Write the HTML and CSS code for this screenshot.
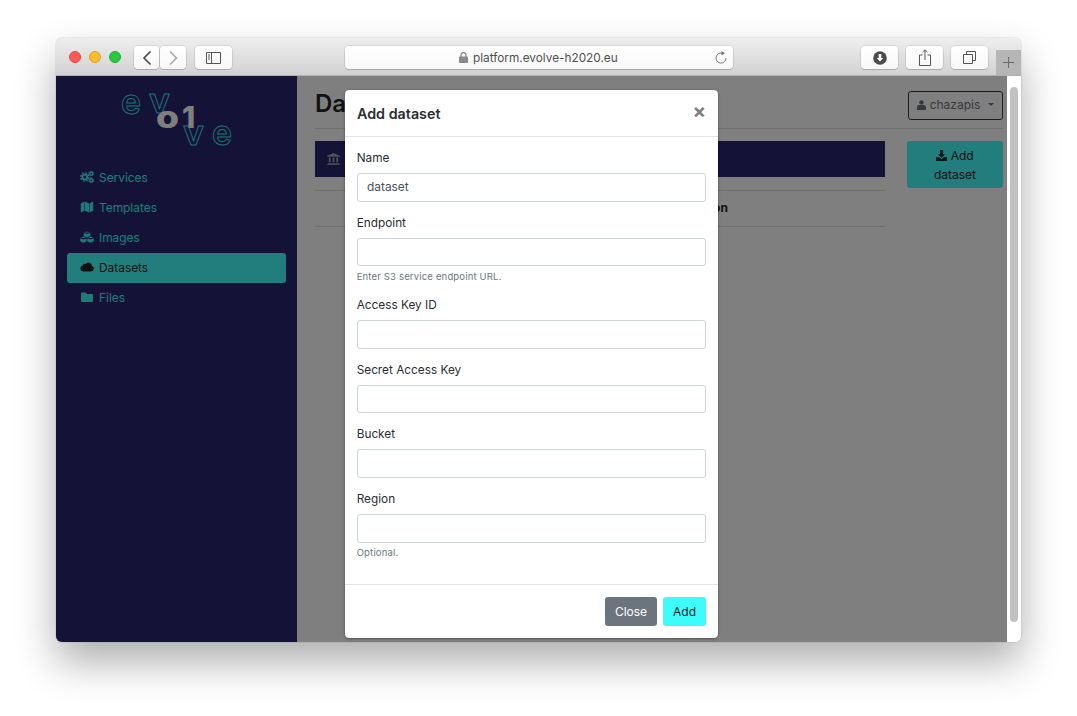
FILE: index.html
```html
<!DOCTYPE html>
<html lang="en">
<head>
<meta charset="utf-8">
<title>Datasets</title>
<link rel="stylesheet" href="styles.css">
</head>
<body>
<div class="window">
  <header class="toolbar">
    <span class="light red"></span><span class="light yellow"></span><span class="light green"></span>
    <div class="tb-btn back"><svg width="12" height="16" viewBox="0 0 12 16"><path d="M9.5 1.5 3 8l6.500 6.500" fill="none" stroke="#444" stroke-width="1.600"/></svg></div>
    <div class="tb-btn forward"><svg width="12" height="16" viewBox="0 0 12 16"><path d="M3 1.500 9.500 8 3 14.500" fill="none" stroke="#a8a8a8" stroke-width="1.600"/></svg></div>
    <div class="tb-btn side"><svg width="15" height="12" viewBox="0 0 15 12"><path d="M.5.500h14v11H.5zM5.500.500v11" fill="none" stroke="#555"/><path d="M2 3h2M2 5h2M2 7h2" stroke="#555"/></svg></div>
    <div class="url">
      <svg class="lock" width="9" height="11" viewBox="0 0 9 11"><rect y="4.500" width="9" height="6.500" rx="1" fill="#8a8a8a"/><path d="M2 5V3a2.500 2.500 0 0 1 5 0v2" fill="none" stroke="#8a8a8a" stroke-width="1.300"/></svg>
      <span class="url-text">platform.evolve-h2020.eu</span>
      <svg class="reload" width="12" height="13" viewBox="0 0 12 13"><path d="M7.500 2.300A5 5 0 1 0 11 7" fill="none" stroke="#777" stroke-width="1"/><path d="M6.500 0v4.500L10 2.200z" fill="#777"/></svg>
    </div>
    <div class="tb-btn right first"><svg width="14" height="14" viewBox="0 0 14 14"><circle cx="7" cy="7" r="6.800" fill="#4a4a4a"/><path d="M5.700 3h2.600v4h2L7 10.500 3.700 7h2z" fill="#fff"/></svg></div>
    <div class="tb-btn right"><svg width="12" height="17" viewBox="0 0 12 17"><path d="M3.500 6H.5v10.500h11V6h-3M6 11V1M3.500 3.200 6 .8l2.500 2.400" fill="none" stroke="#555"/></svg></div>
    <div class="tb-btn right"><svg width="13" height="13" viewBox="0 0 13 13"><path d="M.5 3.500h9v9h-9zM3.500 3.500v-3h9v9h-3" fill="none" stroke="#555"/></svg></div>
    <div class="new-tab"><svg width="11" height="11" viewBox="0 0 11 11"><path d="M5.500 0v11M0 5.500h11" stroke="#6a6a6a"/></svg></div>
  </header>

  <div class="viewport">
    <aside class="sidebar">
      <div class="logo">
        <svg width="130" height="70" viewBox="0 0 130 70">
          <text class="logo-line" x="1" y="29" textLength="20" lengthAdjust="spacingAndGlyphs">e</text>
          <text class="logo-line" x="29" y="28" textLength="21" lengthAdjust="spacingAndGlyphs">v</text>
          <text class="logo-line" x="63" y="60" textLength="21" lengthAdjust="spacingAndGlyphs">v</text>
          <text class="logo-line" x="92" y="60" textLength="20" lengthAdjust="spacingAndGlyphs">e</text>
          <text class="logo-solid" x="36" y="43" textLength="23" lengthAdjust="spacingAndGlyphs">o</text>
          <text class="logo-solid" x="62" y="43">1</text>
        </svg>
      </div>
      <nav class="nav">
        <a class="nav-item">
          <svg class="nav-icon" viewBox="0 0 14 12"><circle cx="4.800" cy="6" r="2.400" fill="none" stroke="currentColor" stroke-width="1.900"/><circle cx="4.800" cy="6" r="4.100" fill="none" stroke="currentColor" stroke-width="1.500" stroke-dasharray="1.700 1.520"/><circle cx="11.200" cy="2.600" r="1.600" fill="none" stroke="currentColor" stroke-width="1.400"/><circle cx="11.200" cy="2.600" r="2.500" fill="none" stroke="currentColor" stroke-width=".9" stroke-dasharray="1 .96"/><circle cx="11.200" cy="9.400" r="1.600" fill="none" stroke="currentColor" stroke-width="1.400"/><circle cx="11.200" cy="9.400" r="2.500" fill="none" stroke="currentColor" stroke-width=".9" stroke-dasharray="1 .96"/></svg>
          Services</a>
        <a class="nav-item">
          <svg class="nav-icon" viewBox="0 0 14 12"><path d="M.8 2.500 4.400.6v9.200L.8 11.600zM4.900.6l4.200 1.800v9.200L4.900 9.800zM9.600 2.400 13.200.6v9.200l-3.600 1.800z"/></svg>
          Templates</a>
        <a class="nav-item">
          <svg class="nav-icon" viewBox="0 0 14 12"><path class="cube" d="M7 .2 10.500 1.500v3.900L7 6.800 3.500 5.400V1.500zM3.500 1.500 7 2.800l3.500-1.300"/><path class="cube" d="M3.500 5.500 7 6.900v3.700L3.500 12 0 10.600V6.900zM0 6.900l3.500 1.300L7 6.900"/><path class="cube" d="M10.500 5.500 14 6.900v3.700L10.500 12 7 10.600V6.900zM7 6.900l3.500 1.300L14 6.900"/></svg>
          Images</a>
        <a class="nav-item active">
          <svg class="nav-icon" viewBox="0 0 14 12"><path d="M3.300 10.500a3 3 0 0 1-.7-5.900 2.300 2.300 0 0 1 3-1.600 3.400 3.400 0 0 1 6.200 1.700 3 3 0 0 1-.8 5.800z"/></svg>
          Datasets</a>
        <a class="nav-item">
          <svg class="nav-icon" viewBox="0 0 14 12"><path d="M2 1.500h3.500L7 3h5a1 1 0 0 1 1 1v6a1 1 0 0 1-1 1H2a1 1 0 0 1-1-1V2.500a1 1 0 0 1 1-1z"/></svg>
          Files</a>
      </nav>
    </aside>

    <main class="main">
      <div class="page-head">
        <h1 class="page-title">Datasets</h1>
        <button class="user-btn"><svg class="user-icon" viewBox="0 0 10 11"><circle cx="5" cy="2.700" r="2.500"/><path d="M0 11V8a2.500 2.500 0 0 1 2.500-2.500h5A2.500 2.500 0 0 1 10 8v3z"/></svg>chazapis<span class="caret"></span></button>
      </div>
      <div class="page-body">
        <div class="left-col">
          <div class="bank-bar"><svg class="bank-icon" viewBox="0 0 14 13"><path d="M7 0 14 3v1H0V3zM1 11h12v1H1zM0 12.200h14V13H0zM2 5h2v5H2zM6 5h2v5H6zM10 5h2v5h-2z"/></svg></div>
          <div class="table-head"><span>Description</span></div>
        </div>
        <button class="add-btn"><svg class="add-icon" viewBox="0 0 12 12"><path d="M4.500 0h3v4.500h2.300L6 8.500 2.200 4.500h2.300zM0 8h3.500L6 10l2.500-2H12v4H0z"/></svg> Add dataset</button>
      </div>
    </main>

    <div class="scrollbar"><div class="thumb"></div></div>
    <div class="backdrop"></div>

    <section class="modal">
      <header class="modal-head">
        <h2 class="modal-title">Add dataset</h2>
        <span class="close">×</span>
      </header>
      <div class="modal-body">
        <div class="field"><label class="label">Name</label><input class="input" value="dataset"></div>
        <div class="field"><label class="label">Endpoint</label><input class="input"><small class="help">Enter S3 service endpoint URL.</small></div>
        <div class="field"><label class="label">Access Key ID</label><input class="input"></div>
        <div class="field"><label class="label">Secret Access Key</label><input class="input"></div>
        <div class="field"><label class="label">Bucket</label><input class="input"></div>
        <div class="field"><label class="label">Region</label><input class="input"><small class="help">Optional.</small></div>
      </div>
      <footer class="modal-foot">
        <button class="btn grey">Close</button>
        <button class="btn cyan">Add</button>
      </footer>
    </section>
  </div>
</div>
</body>
</html>
```
FILE: styles.css
```css
* { box-sizing: border-box; }
html, body { margin: 0; height: 716px; overflow: hidden; background: #fff; }
body { padding: 38px 56px 0; font-family: Inter, "Liberation Sans", sans-serif; }

.window {
  width: 965px;
  height: 604px;
  border-radius: 6px;
  box-shadow: 0 0 1px rgba(0,0,0,.5), 0 20px 40px rgba(0,0,0,.32);
  display: flex;
  flex-direction: column;
}

.toolbar {
  height: 38px;
  flex: none;
  display: flex;
  align-items: flex-start;
  padding: 13px 0 0 13px;
  background: linear-gradient(#eeeeee, #d2d2d2);
  border-radius: 6px 6px 0 0;
  border-bottom: 1px solid #b1b1b1;
  position: relative;
}
.light { width: 12px; height: 12px; border-radius: 50%; margin-right: 8px; }
.red { background: #fc5b57; border: 1px solid #e5453f; }
.yellow { background: #fdbc2f; border: 1px solid #e0a126; }
.green { background: #29c840; border: 1px solid #20ac30; }

.tb-btn {
  height: 23px;
  margin-top: -5px;
  background: linear-gradient(#fff, #f7f7f7);
  border-radius: 4px;
  box-shadow: 0 0 0 .5px rgba(0,0,0,.16), 0 1px 1px rgba(0,0,0,.14);
  display: flex;
  align-items: center;
  justify-content: center;
}
.back { width: 25px; margin-left: 5px; }
.forward { width: 26px; margin-left: 1px; }
.side { width: 37px; margin-left: 9px; }
.right { width: 37px; margin-left: 8px; }
.right.first { margin-left: 128px; }

.url {
  width: 388px;
  height: 23px;
  margin: -5px 0 0 113px;
  background: linear-gradient(#fff, #f8f8f8);
  border-radius: 4px;
  box-shadow: 0 0 0 .5px rgba(0,0,0,.16), 0 1px 1px rgba(0,0,0,.14);
  display: flex;
  align-items: center;
  padding-left: 114px;
  position: relative;
}
.lock { margin-right: 5px; }
.url-text { font-size: 11.800px; color: #4f4f4f; white-space: nowrap; }
.reload { position: absolute; right: 6px; top: 5px; }

.new-tab {
  width: 25px;
  height: 25px;
  margin: -1px 0 0 8px;
  background: #b6b6b6;
  display: flex;
  align-items: center;
  justify-content: center;
  border-top-right-radius: 1px;
}

.viewport {
  flex: 1;
  min-height: 0;
  position: relative;
  display: flex;
  border-radius: 0 0 6px 6px;
  overflow: hidden;
  background: #fff;
}

.sidebar { width: 241px; flex: none; background: #28266e; padding: 0 11px; }
.logo { height: 87px; padding: 9px 0 0 53px; }
.logo svg { display: block; overflow: visible; }
.logo-line {
  font: 600 35px Inter, sans-serif;
  fill: none;
  stroke: #38e4e4;
  stroke-width: .9;
}
.logo-solid { font: 800 30px Inter, sans-serif; fill: #fff; }

.nav { display: flex; flex-direction: column; }
.nav-item {
  height: 30px;
  display: flex;
  align-items: center;
  gap: 5px;
  padding: 0 0 2px 13px;
  border-radius: 3px;
  font-size: 11.900px;
  color: #40f5f5;
}
.nav-icon { width: 14px; height: 12px; fill: currentColor; flex: none; }
.cube { stroke: #28266e; stroke-width: .5; }
.nav-item.active { background: #44fcf8; color: #222; }

.main { flex: 1; min-width: 0; padding: 0 4px 0 18px; background: #fff; }
.page-head {
  height: 53px;
  display: flex;
  justify-content: space-between;
  align-items: flex-start;
  border-bottom: 1px solid #dedede;
}
.page-title { margin: 13px 0 0; font-size: 24px; line-height: 29px; font-weight: 600; color: #212529; }
.user-btn {
  margin-top: 15px;
  width: 95px;
  height: 29px;
  border: 1px solid #343a40;
  border-radius: 3px;
  background: transparent;
  color: #6e7378;
  font: 12px Inter, sans-serif;
  display: flex;
  align-items: center;
  justify-content: center;
  gap: 4px;
  padding: 0 0 2px;
}
.user-icon { width: 9px; height: 10px; fill: #6e7378; }
.caret { width: 0; height: 0; margin-left: 4px; border: 3px solid transparent; border-top-color: #6e7378; border-bottom: 0; }

.page-body { display: flex; justify-content: space-between; padding-top: 12px; }
.left-col { width: 570px; }
.bank-bar { height: 36px; background: #28266e; display: flex; align-items: center; padding-left: 12px; }
.bank-icon { width: 13px; height: 12px; fill: #a0a0a8; }
.table-head {
  height: 37px;
  margin-top: 13px;
  border-top: 1px solid #dedede;
  border-bottom: 1px solid #dedede;
  font-size: 12px;
  font-weight: 700;
  color: #212529;
  line-height: 33px;
  padding-left: 345px;
}
.add-btn {
  width: 96px;
  height: 47px;
  border: 0;
  border-radius: 3px;
  background: #44fcf8;
  color: #212529;
  font: 12px/19px Inter, sans-serif;
  padding: 1px 14px 0;
}
.add-icon { width: 11px; height: 11px; fill: #212529; vertical-align: -1px; }

.scrollbar { width: 14px; flex: none; background: #fff; position: relative; z-index: 3; padding: 11px 3px 20px; }
.thumb { height: 100%; background: #c1c1c1; border-radius: 4px; }

.backdrop { position: absolute; inset: 0 14px 0 0; background: rgba(0,0,0,.5); z-index: 1; }

.modal {
  position: absolute;
  left: 289px;
  top: 14px;
  width: 373px;
  height: 548px;
  background: #fff;
  border-radius: 4px;
  box-shadow: 0 0 1px rgba(0,0,0,.5), 0 1px 3px rgba(0,0,0,.3);
  z-index: 2;
  display: flex;
  flex-direction: column;
}
.modal-head {
  height: 47px;
  flex: none;
  display: flex;
  justify-content: space-between;
  align-items: center;
  padding: 0 12px;
  border-bottom: 1px solid #e2e2e8;
}
.modal-title { margin: 0; font-size: 14.300px; font-weight: 600; color: #2a2e33; }
.close { font-size: 20px; font-weight: 700; color: #7f7f7f; line-height: 1; margin-top: -4px; }

.modal-body { flex: 1; padding: 12px 12px 0 11.700px; }
.field { margin-bottom: 12px; display: flex; flex-direction: column; }
.label { font-size: 11.800px; line-height: 18px; color: #2a2e33; margin-bottom: 6px; }
.input {
  height: 28.670px;
  margin-left: .3px;
  border: 1px solid #ced4da;
  border-radius: 3px;
  padding: 0 9px 1px;
  font: 11.900px Inter, sans-serif;
  color: #495057;
  background: #fff;
  outline: 0;
}
.help { font-size: 9.500px; line-height: 14px; color: #6c757d; margin-top: 3.700px; letter-spacing: .17px; }

.modal-foot {
  height: 54px;
  flex: none;
  border-top: 1px solid #e2e2e8;
  display: flex;
  justify-content: flex-end;
  align-items: center;
  gap: 6px;
  padding: 0 12px;
}
.btn { height: 29px; border: 0; border-radius: 3px; font: 12px Inter, sans-serif; padding: 0; }
.grey { width: 52px; background: #6c757d; color: #fff; }
.cyan { width: 43px; background: #3ffcfc; color: #212529; }
```
